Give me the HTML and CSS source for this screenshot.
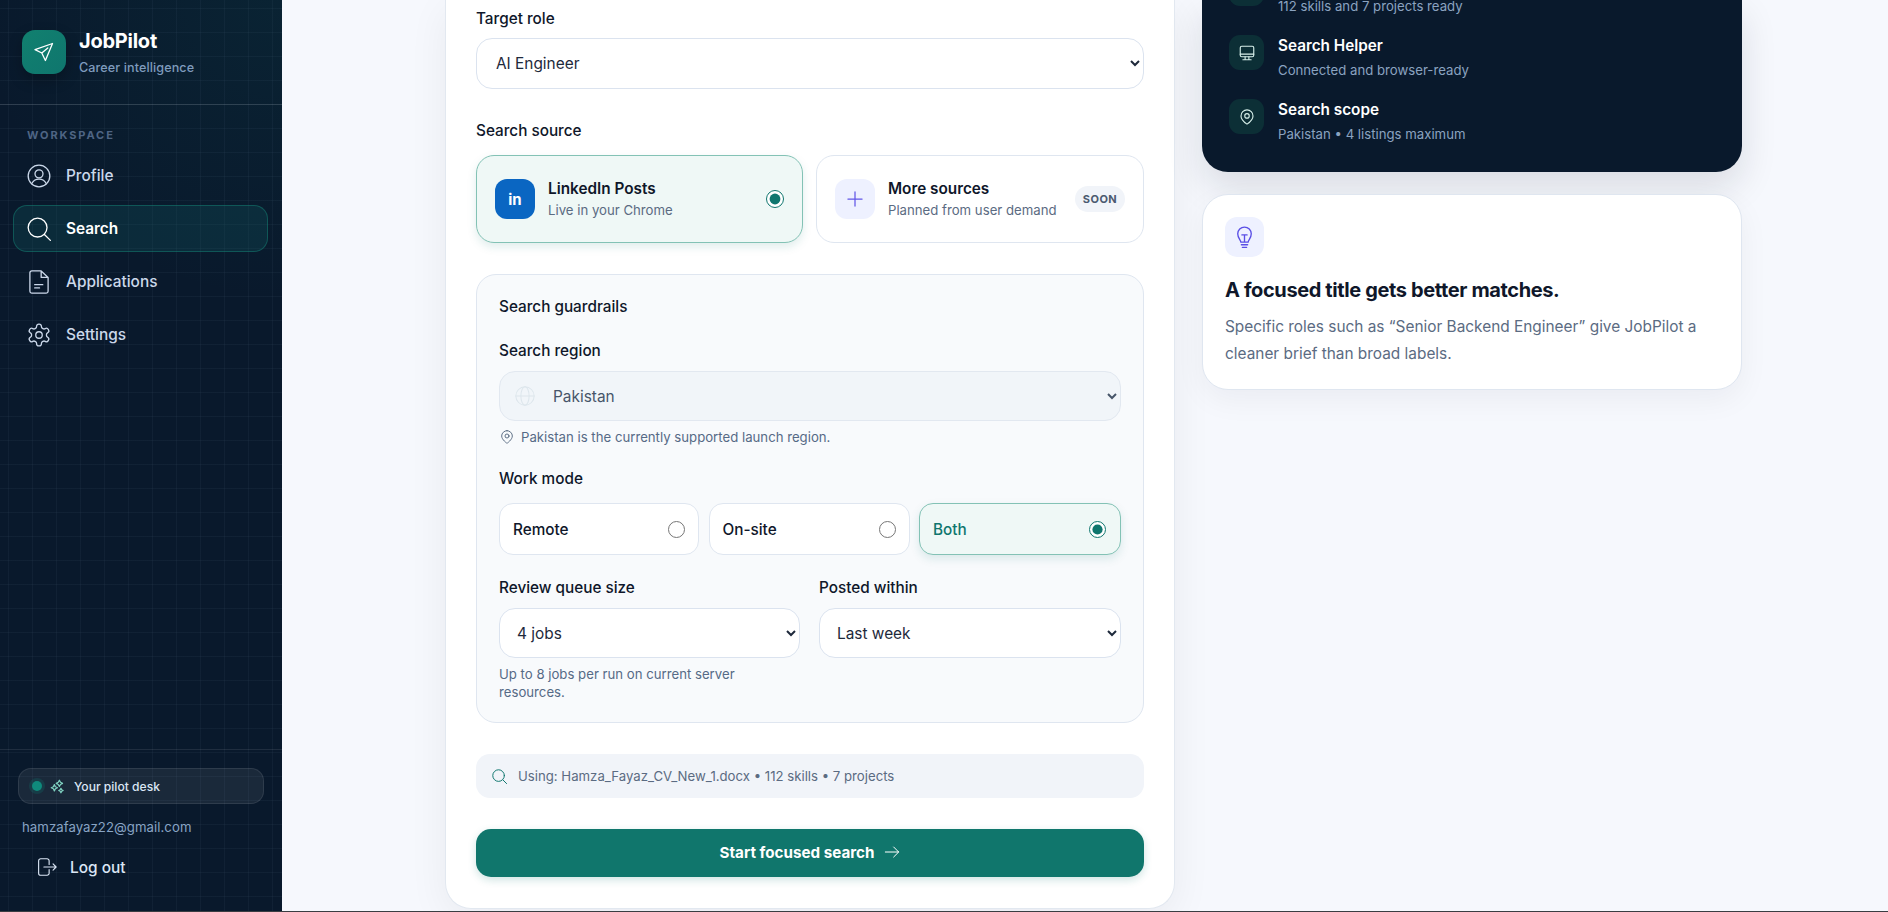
FILE: index.html
```html
<!DOCTYPE html>
<html lang="en">
<head>
<meta charset="utf-8">
<title>JobPilot</title>
<link rel="stylesheet" href="styles.css">
</head>
<body>
<div class="app">
  <aside class="sidebar">
    <div class="brand">
      <div class="logo">
        <svg class="ic-logo" viewBox="0 0 24 24"><path d="M20.500 3.500 3 9.600l6.800 3.400 3.600 7.500zM9.800 13l6-5"/></svg>
      </div>
      <div>
        <div class="brand-name">JobPilot</div>
        <div class="brand-sub">Career intelligence</div>
      </div>
    </div>
    <div class="nav-label">WORKSPACE</div>
    <nav class="nav">
      <a class="nav-item"><svg class="ic-nav" viewBox="0 0 24 24"><circle cx="12" cy="12" r="10"/><circle cx="12" cy="10" r="3.700"/><path d="M5.200 19.200c1.300-2.900 3.800-4.400 6.800-4.400s5.500 1.500 6.800 4.400"/></svg>Profile</a>
      <a class="nav-item active"><svg class="ic-nav" viewBox="0 0 24 24"><circle cx="10.700" cy="10.700" r="8.700"/><path d="M17 17l5.500 5.500"/></svg>Search</a>
      <a class="nav-item"><svg class="ic-nav" viewBox="0 0 24 24"><path d="M14 1.800H5.300a1.700 1.700 0 0 0-1.700 1.700v17a1.700 1.700 0 0 0 1.700 1.700h13.400a1.700 1.700 0 0 0 1.700-1.700V7.800zM14 1.800v6h6.400M8 17.500h4.500M8 14.500h7.500"/></svg>Applications</a>
      <a class="nav-item"><svg class="ic-nav" viewBox="0 0 24 24"><path d="M12.220 2h-.44a2 2 0 0 0-2 2v.18a2 2 0 0 1-1 1.730l-.43.250a2 2 0 0 1-2 0l-.15-.08a2 2 0 0 0-2.730.730l-.22.380a2 2 0 0 0 .73 2.730l.15.100a2 2 0 0 1 1 1.720v.510a2 2 0 0 1-1 1.740l-.15.090a2 2 0 0 0-.73 2.730l.22.380a2 2 0 0 0 2.730.730l.15-.08a2 2 0 0 1 2 0l.43.250a2 2 0 0 1 1 1.730V20a2 2 0 0 0 2 2h.44a2 2 0 0 0 2-2v-.18a2 2 0 0 1 1-1.730l.43-.25a2 2 0 0 1 2 0l.15.080a2 2 0 0 0 2.730-.73l.22-.39a2 2 0 0 0-.73-2.730l-.15-.08a2 2 0 0 1-1-1.740v-.5a2 2 0 0 1 1-1.740l.15-.09a2 2 0 0 0 .73-2.730l-.22-.38a2 2 0 0 0-2.730-.73l-.15.080a2 2 0 0 1-2 0l-.43-.25a2 2 0 0 1-1-1.730V4a2 2 0 0 0-2-2z"/><circle cx="12" cy="12" r="3"/></svg>Settings</a>
    </nav>
    <div class="side-foot">
      <div class="desk">
        <span class="dot"></span>
        <svg class="ic-spark" viewBox="0 0 24 24"><path d="M15 2l1.800 3.200L20 7l-3.200 1.800L15 12l-1.800-3.200L10 7l3.200-1.800zM7 9l1.600 3.400L12 14l-3.400 1.600L7 19l-1.600-3.400L2 14l3.400-1.600zM17.500 15l1.200 2.300 2.300 1.200-2.300 1.200-1.200 2.300-1.200-2.300-2.300-1.200 2.300-1.200z"/></svg>
        <span>Your pilot desk</span>
      </div>
      <div class="email">hamzafayaz22@gmail.com</div>
      <a class="logout"><svg class="ic-logout" viewBox="0 0 24 24"><path d="M15 9V5a2.400 2.400 0 0 0-2.400-2.400H5.400A2.400 2.400 0 0 0 3 5v14a2.400 2.400 0 0 0 2.400 2.400h7.200A2.400 2.400 0 0 0 15 19v-4M9 12h14M19.500 8.500 23 12l-3.500 3.500"/></svg>Log out</a>
    </div>
  </aside>

  <main class="main">
    <section class="form-card">
      <div class="label">Target role</div>
      <select class="select role-select"><option>AI Engineer</option></select>

      <div class="label source-label">Search source</div>
      <div class="sources">
        <label class="source selected">
          <span class="src-icon linkedin">in</span>
          <span class="src-text"><b>LinkedIn Posts</b><small>Live in your Chrome</small></span>
          <input type="radio" name="source" class="radio" checked>
        </label>
        <div class="source">
          <span class="src-icon more"><svg class="ic-plus" viewBox="0 0 24 24"><path d="M12 3.500v17M3.500 12h17"/></svg></span>
          <span class="src-text"><b>More sources</b><small>Planned from user demand</small></span>
          <span class="soon">SOON</span>
        </div>
      </div>

      <div class="panel">
        <div class="label">Search guardrails</div>
        <div class="label region-label">Search region</div>
        <div class="region">
          <svg class="ic-globe" viewBox="0 0 24 24"><circle cx="12" cy="12" r="10"/><ellipse cx="12" cy="12" rx="4.500" ry="10"/><path d="M2 12h20"/></svg>
          <select class="select region-select"><option>Pakistan</option></select>
        </div>
        <div class="hint-row">
          <svg class="ic-hint" viewBox="0 0 24 24"><path d="M12 2.500a8 8 0 0 0-8 8c0 5.500 8 11 8 11s8-5.500 8-11a8 8 0 0 0-8-8z"/><circle cx="12" cy="10.500" r="3"/></svg>
          Pakistan is the currently supported launch region.
        </div>
        <div class="label mode-label">Work mode</div>
        <div class="modes">
          <label class="mode">Remote<input type="radio" name="mode" class="radio r17"></label>
          <label class="mode">On-site<input type="radio" name="mode" class="radio r17"></label>
          <label class="mode selected">Both<input type="radio" name="mode" class="radio r17" checked></label>
        </div>
        <div class="two-col">
          <div>
            <div class="label">Review queue size</div>
            <select class="select field-select"><option>4 jobs</option></select>
            <p class="hint">Up to 8 jobs per run on current server resources.</p>
          </div>
          <div>
            <div class="label">Posted within</div>
            <select class="select field-select"><option>Last week</option></select>
          </div>
        </div>
      </div>

      <div class="using">
        <svg class="ic-using" viewBox="0 0 24 24"><circle cx="10.700" cy="10.700" r="8.200"/><path d="M17 17l5 5"/></svg>
        Using: Hamza_Fayaz_CV_New_1.docx • 112 skills • 7 projects
      </div>

      <button class="start">Start focused search
        <svg class="ic-arrow" viewBox="0 0 24 24"><path d="M2 12h20M14.500 4.500 22 12l-7.500 7.500"/></svg>
      </button>
    </section>

    <div class="side-col">
      <section class="status-card">
        <div class="status-item clipped">
          <span class="status-icon"></span>
          <div class="status-sub">112 skills and 7 projects ready</div>
        </div>
        <div class="status-item">
          <span class="status-icon"><svg class="ic-status" viewBox="0 0 24 24"><rect x="3" y="3" width="18" height="14" rx="2"/><path d="M3 13.500h18M9.500 17v4M14.500 17v4M6.500 21h11"/></svg></span>
          <div><div class="status-title">Search Helper</div><div class="status-sub">Connected and browser-ready</div></div>
        </div>
        <div class="status-item">
          <span class="status-icon"><svg class="ic-status" viewBox="0 0 24 24"><path d="M12 2.500a8 8 0 0 0-8 8c0 5.500 8 11 8 11s8-5.500 8-11a8 8 0 0 0-8-8z"/><circle cx="12" cy="10.500" r="3"/></svg></span>
          <div><div class="status-title">Search scope</div><div class="status-sub">Pakistan • 4 listings maximum</div></div>
        </div>
      </section>

      <section class="tip-card">
        <span class="tip-icon"><svg class="ic-bulb" viewBox="0 0 24 24"><path d="M8.500 16.500c0-2-3-3.500-3-8a6.500 6.500 0 0 1 13 0c0 4.500-3 6-3 8zM12 16.500V10M9.500 9.500h5M9 19h6M10 21.500h4"/></svg></span>
        <h2 class="tip-title">A focused title gets better matches.</h2>
        <p class="tip-text">Specific roles such as “Senior Backend Engineer” give JobPilot a cleaner brief than broad labels.</p>
      </section>
    </div>
  </main>
</div>
</body>
</html>
```
FILE: styles.css
```css
* { box-sizing: border-box; }
html, body { margin: 0; height: 912px; overflow: hidden; }
body {
  background: #3a3d42;
  font-family: Inter, "Liberation Sans", sans-serif;
  color: #0f172a;
}
svg { fill: none; stroke: currentColor; stroke-linecap: round; stroke-linejoin: round; flex: none; }

.app { display: flex; height: 911px; overflow: hidden; }

/* Sidebar */
.sidebar {
  width: 282px;
  flex: none;
  display: flex;
  flex-direction: column;
  color: #dbe6f5;
  background:
    linear-gradient(rgba(148,180,210,.05) 1px, transparent 1px) 0 8px / 24px 24px,
    linear-gradient(90deg, rgba(148,180,210,.05) 1px, transparent 1px) 8px 0 / 24px 24px,
    radial-gradient(circle at 100% 0, rgba(15,118,110,.11), transparent 300px),
    #09192c;
}
.brand {
  height: 105px;
  display: flex;
  gap: 13px;
  padding: 30px 22px 0;
  border-bottom: 1px solid rgba(255,255,255,.13);
}
.logo {
  width: 44px; height: 44px;
  border-radius: 13px;
  background: linear-gradient(135deg, #11806f, #0f766e);
  box-shadow: 0 6px 14px rgba(0,0,0,.25);
  display: flex; align-items: center; justify-content: center;
  color: #fff;
}
.ic-logo { width: 24px; height: 24px; stroke-width: 1.300; }
.brand-name { font-size: 20px; line-height: 24px; font-weight: 700; color: #fff; letter-spacing: -.25px; margin-top: -1px; }
.brand-sub { font-size: 12.600px; line-height: 17px; font-weight: 500; color: #7f9bbd; margin-top: 6px; letter-spacing: .1px; }
.nav-label {
  font-size: 11px; line-height: 14px; font-weight: 700; letter-spacing: 1.900px;
  color: #4f6584;
  margin: 23px 0 10px 27px;
}
.nav { display: flex; flex-direction: column; gap: 6px; padding: 0 14px 0 13px; }
.nav-item {
  height: 47px;
  display: flex; align-items: center; gap: 14px;
  padding: 0 12px;
  font-size: 15.400px; font-weight: 500;
  color: #cbd8ea;
  border: 1px solid transparent;
  border-radius: 14px;
}
.nav-item.active {
  color: #fff; font-weight: 600;
  background: rgba(20,100,105,.24);
  border-color: rgba(20,130,115,.5);
}
.ic-nav { width: 26px; height: 26px; stroke-width: 1.200; }
.side-foot {
  margin-top: auto;
  border-top: 1px solid rgba(255,255,255,.09);
  padding: 18px 18px 0;
  height: 162px;
}
.desk {
  width: 246px; height: 36px;
  display: flex; align-items: center;
  padding: 0 13px;
  border: 1px solid rgba(255,255,255,.09);
  border-radius: 13px;
  background: rgba(255,255,255,.07);
  font-size: 12.100px; font-weight: 500; color: #dbe6f5;
}
.dot {
  width: 10px; height: 10px; border-radius: 50%;
  background: #0f8a7c;
  box-shadow: 0 0 0 3px rgba(15,138,124,.2);
}
.ic-spark { width: 15px; height: 15px; margin: 0 9px 0 8px; stroke: #7fd1c0; stroke-width: 2; }
.email { font-size: 13.200px; line-height: 16px; color: #88a4c4; margin: 15px 0 0 4px; letter-spacing: .05px; }
.logout {
  display: flex; align-items: center; gap: 13px;
  margin: 20px 0 0 18px;
  height: 24px;
  font-size: 15.400px; font-weight: 500; color: #dbe6f5;
}
.ic-logout { width: 21px; height: 22px; stroke-width: 1.300; }

/* Main */
.main {
  flex: 1;
  display: flex;
  align-items: flex-start;
  gap: 27px;
  padding-left: 163px;
  background: #f6f8fd;
}
.form-card {
  width: 730px;
  height: 909px;
  padding: 9px 30px 0;
  background: #fff;
  border: 1px solid #e2e8f0;
  border-top: 0;
  border-radius: 0 0 26px 26px;
  box-shadow: 0 10px 40px rgba(15,23,42,.06);
}
.label { font-size: 15.300px; line-height: 20px; font-weight: 500; color: #0f172a; }
.select {
  display: block;
  width: 100%;
  font: 400 15.400px Inter, "Liberation Sans", sans-serif;
  color: #1e293b;
  background-color: #fff;
  border: 1px solid #dbe3ef;
  border-radius: 16px;
  padding: 0 12px;
}
.role-select { height: 51px; margin-top: 9px; padding-left: 15px; }
.source-label { margin-top: 32px; }
.sources { display: grid; grid-template-columns: 327px 1fr; gap: 13px; margin-top: 14px; }
.source {
  height: 88px;
  display: flex; align-items: center; gap: 13px;
  padding: 0 18px;
  border: 1px solid #dfe6f0;
  border-radius: 18px;
  background: #fff;
}
.source.selected {
  background: #eff8f6;
  border-color: #83c2b5;
  box-shadow: 0 4px 10px rgba(15,118,110,.13);
}
.src-icon {
  width: 40px; height: 40px; flex: none;
  border-radius: 12px;
  display: flex; align-items: center; justify-content: center;
}
.linkedin { background: #0a66c2; color: #fff; font-size: 15px; font-weight: 700; }
.more { background: #eef1ff; color: #6257e8; }
.ic-plus { width: 20px; height: 20px; stroke-width: 1.500; }
.src-text { flex: 1; display: flex; flex-direction: column; min-width: 0; }
.src-text b { font-size: 15.300px; line-height: 20px; font-weight: 600; color: #0f172a; }
.src-text small { font-size: 13.200px; line-height: 18px; margin-top: 2px; color: #5b6b82; white-space: nowrap; }
.radio { margin: 0; width: 18px; height: 18px; accent-color: #0f766e; flex: none; }
.r17 { width: 17px; height: 17px; }
.soon {
  width: 50px; height: 26px; flex: none;
  border-radius: 13px;
  background: #f1f4f9;
  color: #4b5a70;
  font-size: 11px; font-weight: 700; letter-spacing: .5px;
  display: flex; align-items: center; justify-content: center;
}
.panel {
  margin-top: 31px;
  height: 449px;
  padding: 22px 22px 0;
  background: #f8fafc;
  border: 1px solid #dfe6f0;
  border-radius: 20px;
}
.region-label { margin-top: 24px; }
.region { position: relative; margin-top: 10px; }
.ic-globe {
  position: absolute; left: 15px; top: 14px;
  width: 22px; height: 22px;
  color: #dde6ec; stroke-width: 1.100;
}
.region-select {
  height: 50px;
  padding-left: 49px;
  background-color: #f1f5f9;
  color: #475569;
  border-color: #e2e8f0;
}
.hint-row {
  display: flex; align-items: center; gap: 6px;
  margin-top: 8px;
  font-size: 13.200px; line-height: 16px; color: #566a86;
}
.ic-hint { width: 16px; height: 16px; stroke-width: 1.400; color: #55677f; }
.mode-label { margin-top: 24px; }
.modes { display: grid; grid-template-columns: 200px 201px 202px; gap: 9.500px; margin-top: 14px; }
.mode {
  height: 52px;
  display: flex; align-items: center; justify-content: space-between;
  padding: 0 13px;
  background: #fff;
  border: 1px solid #dfe6f0;
  border-radius: 14px;
  font-size: 15.300px; font-weight: 500; color: #0f172a;
}
.mode.selected {
  padding-right: 14px;
  background: #eff8f6;
  border-color: #83c2b5;
  color: #0f766e;
  box-shadow: 0 4px 10px rgba(15,118,110,.13);
}
.two-col { display: grid; grid-template-columns: 301px 1fr; gap: 19px; margin-top: 23px; }
.field-select { height: 50px; margin-top: 10px; padding-left: 13px; }
.hint { margin: 7px 0 0; font-size: 13.200px; line-height: 18px; color: #566a86; }
.using {
  height: 44px;
  margin-top: 31px;
  display: flex; align-items: center; gap: 10px;
  padding: 0 15px;
  background: #f1f4f9;
  border-radius: 14px;
  font-size: 13.200px; color: #5b6b82;
}
.ic-using { width: 17px; height: 17px; color: #0f766e; stroke-width: 1.400; }
.start {
  width: 100%;
  height: 48px;
  margin-top: 31px;
  padding: 0 0 2px;
  display: flex; align-items: center; justify-content: center; gap: 10px;
  border: 0;
  border-radius: 15px;
  background: #10766c;
  color: #fff;
  font: 700 15.200px Inter, "Liberation Sans", sans-serif;
  box-shadow: 0 3px 8px rgba(15,118,110,.2);
}
.ic-arrow { width: 16px; height: 16px; stroke-width: 1.500; }

/* Right column */
.side-col { width: 540px; display: flex; flex-direction: column; gap: 22px; }
.status-card {
  height: 172px;
  overflow: hidden;
  display: flex; flex-direction: column; justify-content: flex-end; gap: 20px;
  padding: 0 27px 29px;
  background: #09192c;
  border-radius: 0 0 26px 26px;
  box-shadow: 0 16px 36px rgba(15,23,42,.12);
}
.status-item { display: flex; gap: 14px; flex: none; }
.status-item.clipped { align-items: flex-end; }
.status-item.clipped .status-icon { margin-bottom: 9px; }
.status-icon {
  width: 35px; height: 35px; flex: none;
  border-radius: 11px;
  background: #0c2f36;
  color: #d7f0ea;
  display: flex; align-items: center; justify-content: center;
}
.ic-status { width: 18px; height: 18px; stroke-width: 1.500; }
.status-title { font-size: 15.300px; line-height: 20px; font-weight: 600; color: #fff; padding-top: 1px; }
.status-sub { font-size: 13.200px; line-height: 18px; color: #8ba3c0; margin-top: 5px; }
.status-item.clipped .status-sub { margin: 0 0 3px; line-height: 12px; }
.tip-card {
  height: 196px;
  padding: 22px;
  background: #fff;
  border: 1px solid #dfe6f0;
  border-radius: 26px;
  box-shadow: 0 10px 30px rgba(15,23,42,.05);
}
.tip-icon {
  display: flex; align-items: center; justify-content: center;
  width: 39px; height: 40px;
  border-radius: 12px;
  background: #eef1ff;
  color: #5a4fe6;
}
.ic-bulb { width: 25px; height: 25px; stroke-width: 1.300; }
.tip-title { margin: 19px 0 0; font-size: 20px; line-height: 28px; font-weight: 700; letter-spacing: -.38px; color: #0f172a; }
.tip-text { margin: 9px 0 0; font-size: 15.400px; line-height: 27px; color: #5b6b82; }
```
